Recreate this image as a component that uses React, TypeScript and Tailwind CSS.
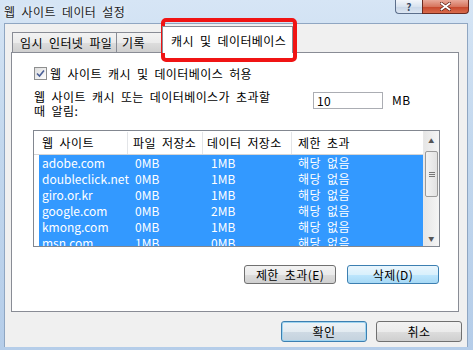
import React from 'react';

const sites = [
  { name: 'adobe.com', file: '0MB', data: '1MB' },
  { name: 'doubleclick.net', file: '0MB', data: '1MB' },
  { name: 'giro.or.kr', file: '0MB', data: '1MB' },
  { name: 'google.com', file: '0MB', data: '2MB' },
  { name: 'kmong.com', file: '0MB', data: '1MB' },
  { name: 'msn.com', file: '1MB', data: '0MB' },
];

function WinButton({ label, variant = 'normal', className = '' }: { label: string; variant?: 'normal' | 'hot' | 'default'; className?: string }) {
  const look =
    variant === 'hot'
      ? 'border-[#3c7fb1] bg-[linear-gradient(#eaf6fd_0%,#d9f0fc_50%,#bee6fd_51%,#a7d9f5_100%)]'
      : variant === 'default'
        ? 'border-[#3c7fb1] bg-[linear-gradient(#eef3f7_0%,#e3ebf1_50%,#cfdae4_51%,#c4d2de_100%)] shadow-[inset_0_0_0_1px_#9fd4f0]'
        : 'border-[#707070] bg-[linear-gradient(#f2f2f2_0%,#ebebeb_50%,#dddddd_51%,#cfcfcf_100%)]';
  return (
    <div className={`flex items-center justify-center rounded-[3px] border text-[12px] leading-[14px] text-black ${look} ${className}`}>
      {label}
    </div>
  );
}

export default function App() {
  return (
    <div className="relative flex h-[350px] w-[473px] flex-col overflow-hidden bg-[linear-gradient(180deg,#d6e5f5_0%,#c3d8ee_40%,#b5cde9_100%)] font-['Noto_Sans_CJK_KR','Noto_Sans',sans-serif] tracking-[0.4px] text-black [word-spacing:3px]">
      {/* title bar */}
      <div className="flex h-[23px] shrink-0 items-start justify-between">
        <div className="pl-[4px] pt-[4px] text-[12px] leading-[15px] text-[#1e1e1e] [text-shadow:0_0_6px_#ffffff]">
          웹 사이트 데이터 설정
        </div>
        <div className="mr-[4px] flex">
          <div className="flex h-[14px] w-[27px] items-center justify-center rounded-bl-[4px] border border-t-0 border-r-0 border-[#5c6f8c] bg-[linear-gradient(#f3f6fb,#d9e3ef_50%,#c8d6e7_51%,#dce6f2)] text-[10px] font-bold leading-none text-[#3b4a62]">
            ?
          </div>
          <div className="flex h-[14px] w-[47px] items-center justify-center rounded-br-[4px] border border-t-0 border-[#6b2a20] bg-[linear-gradient(#e9a99a,#d7765f_50%,#c5452b_51%,#d96b4c)]">
            <svg width="11" height="9" viewBox="0 0 11 9">
              <path d="M1.5 1.5 L9.5 7.5 M9.5 1.5 L1.5 7.5" stroke="#5a1c12" strokeWidth="3.2" strokeLinecap="square" />
              <path d="M1.5 1.5 L9.5 7.5 M9.5 1.5 L1.5 7.5" stroke="#ffffff" strokeWidth="1.8" strokeLinecap="square" />
            </svg>
          </div>
        </div>
      </div>

      {/* client area */}
      <div className="ml-[4px] mr-[5px] flex h-[324px] shrink-0 flex-col border-x border-t border-[#8fa6c2] bg-[#f0f0f0] pl-[6px] pr-[8px] pt-[2px] pb-[5px]">
        {/* tabs */}
        <div className="flex h-[26px] items-end pl-[1px]">
          <div className="flex h-[20px] w-[105px] items-center whitespace-nowrap border border-b-0 border-[#898c95] bg-[linear-gradient(#f3f3f3,#ebebeb_50%,#dddddd_51%,#cfcfcf)] pl-[7px] pt-[1px] text-[12px] leading-[14px]">
            임시 인터넷 파일
          </div>
          <div className="flex h-[20px] w-[47px] items-center border border-b-0 border-l-0 border-[#898c95] bg-[linear-gradient(#f3f3f3,#ebebeb_50%,#dddddd_51%,#cfcfcf)] pl-[5px] pt-[1px] text-[12px] leading-[14px]">
            기록
          </div>
          <div className="relative z-10 -mb-px -ml-[2px] flex h-[27px] w-[131px] items-center whitespace-nowrap border border-b-0 border-[#898c95] bg-white pl-[8px] pt-[2px] text-[12px] leading-[14px]">
            캐시 및 데이터베이스
          </div>
        </div>

        {/* tab panel */}
        <div className="flex h-[260px] flex-col border border-[#898c95] bg-white">
          <div className="ml-[22px] mt-[14px] flex h-[13px] items-center gap-[3px]">
            <div className="flex h-[13px] w-[13px] items-center justify-center border border-[#8e8f8f] bg-[linear-gradient(135deg,#dcdcdc,#ffffff)]">
              <svg width="9" height="9" viewBox="0 0 9 9">
                <path d="M1 4.5 L3.5 7 L8 1.5" fill="none" stroke="#4a5f97" strokeWidth="1.6" />
              </svg>
            </div>
            <span className="whitespace-nowrap text-[12px] leading-[14px]">웹 사이트 캐시 및 데이터베이스 허용</span>
          </div>

          <div className="ml-[22px] mt-[10px] flex h-[28px] items-start">
            <div className="w-[279px] whitespace-nowrap text-[12px] leading-[14px]">
              웹 사이트 캐시 또는 데이터베이스가 초과할
              <br />
              때 알림:
            </div>
            <div className="mt-[2px] flex h-[17px] w-[70px] items-center border border-[#abadb3] bg-white pl-[3px] text-[12px] leading-[14px]">
              10
            </div>
            <span className="ml-[9px] mt-[3px] text-[12px] leading-[14px]">MB</span>
          </div>

          {/* list view */}
          <div className="ml-[21px] mt-[12px] flex h-[117px] w-[407px] overflow-hidden border border-[#828790] bg-white">
            <div className="flex w-[389px] flex-col overflow-hidden">
              <div className="flex h-[24px] shrink-0 items-center whitespace-nowrap border-b border-[#d5d5d5] text-[12px] leading-[14px]">
                <div className="w-[94px] border-r border-[#e3e5e8] pl-[8px] leading-[22px]">웹 사이트</div>
                <div className="w-[75px] border-r border-[#e3e5e8] pl-[5px] leading-[22px]">파일 저장소</div>
                <div className="w-[89px] border-r border-[#e3e5e8] pl-[4px] leading-[22px]">데이터 저장소</div>
                <div className="flex-1 pl-[6px] leading-[22px]">제한 초과</div>
              </div>
              <div className="ml-[5px] flex flex-col bg-[#3399ff] text-[12px] leading-[16px] text-white">
                {sites.map((s) => (
                  <div key={s.name} className="flex h-[16px] shrink-0 pl-[3px]">
                    <div className="w-[93px] tracking-normal">{s.name}</div>
                    <div className="w-[76px] tracking-normal">{s.file}</div>
                    <div className="w-[87px] tracking-normal">{s.data}</div>
                    <div>해당 없음</div>
                  </div>
                ))}
              </div>
            </div>
            {/* scrollbar */}
            <div className="flex w-[16px] flex-col border-l border-[#e8e8e8] bg-[linear-gradient(90deg,#e6e6e6,#f5f5f5)]">
              <div className="flex h-[20px] items-center justify-center text-[6px] leading-none text-[#555]">▲</div>
              <div className="mx-[1px] flex h-[46px] items-center justify-center rounded-[2px] border border-[#9a9a9a] bg-[linear-gradient(90deg,#f3f3f3,#e2e2e2)]">
                <svg width="6" height="5" viewBox="0 0 6 5">
                  <path d="M0 0.5 H6 M0 2.5 H6 M0 4.5 H6" stroke="#777" strokeWidth="1" />
                </svg>
              </div>
              <div className="flex-1" />
              <div className="flex h-[14px] items-center justify-center text-[6px] leading-none text-[#555]">▼</div>
            </div>
          </div>

          <div className="mr-[19px] mt-[18px] flex justify-end gap-[11px]">
            <WinButton label="제한 초과(E)" className="h-[19px] w-[92px]" />
            <WinButton label="삭제(D)" variant="hot" className="h-[19px] w-[92px]" />
          </div>
        </div>

        {/* dialog buttons */}
        <div className="mr-[-3px] mt-[9px] flex justify-end gap-[9px]">
          <WinButton label="확인" variant="default" className="h-[21px] w-[86px]" />
          <WinButton label="취소" className="h-[21px] w-[86px]" />
        </div>
      </div>

      {/* red highlight drawn over the selected tab */}
      <div className="pointer-events-none absolute left-[161px] top-[18px] h-[44px] w-[136px] rounded-[5px] border-[4px] border-[#f01414]" />
    </div>
  );
}
